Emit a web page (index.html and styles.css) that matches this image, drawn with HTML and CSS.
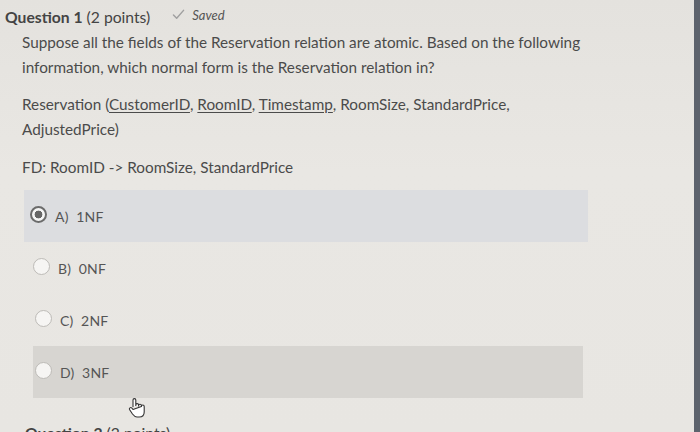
FILE: index.html
```html
<!DOCTYPE html>
<html lang="en">
<head>
<meta charset="utf-8">
<title>Question 1</title>
<link rel="stylesheet" href="styles.css">
</head>
<body>
<div class="screen">
  <div class="page">
    <div class="q-header">
      <span class="q-title"><b>Question 1</b> (2 points)</span>
      <span class="saved"><svg class="check" viewBox="0 0 14 12" width="13" height="11"><path d="M1.5 6.5 L5 10 L12.5 1.5" fill="none" stroke="#a0a0a0" stroke-width="1.6" stroke-linecap="round" stroke-linejoin="round"/></svg>Saved</span>
    </div>
    <div class="q-body">
      <p class="prompt">Suppose all the fields of the Reservation relation are atomic. Based on the following<br>information, which normal form is the Reservation relation in?</p>
      <p class="schema">Reservation (<u>CustomerID</u>, <u>RoomID</u>, <u>Timestamp</u>, RoomSize, StandardPrice,<br>AdjustedPrice)</p>
      <p class="fd">FD: RoomID -&gt; RoomSize, StandardPrice</p>
      <div class="options">
        <div class="opt opt-a selected"><span class="radio checked"></span><span class="label">A)&nbsp; 1NF</span></div>
        <div class="opt opt-b"><span class="radio"></span><span class="label">B)&nbsp; 0NF</span></div>
        <div class="opt opt-c"><span class="radio"></span><span class="label">C)&nbsp; 2NF</span></div>
        <div class="opt opt-d hover"><span class="radio"></span><span class="label">D)&nbsp; 3NF</span>
          <svg class="cursor" viewBox="0 0 20 22" width="20" height="22"><path d="M6 10 V3 a1.4 1.4 0 0 1 2.8 0 V9 M8.8 8 a1.4 1.4 0 0 1 2.8 0 V9.5 M11.6 8.6 a1.4 1.4 0 0 1 2.8 0 V10 M14.4 9.4 a1.4 1.4 0 0 1 2.8 0 V15 c0 3 -2 5 -5 5 H10 c-2 0 -3 -1 -4.5 -3 L2.5 12.5 a1.4 1.4 0 0 1 2.2 -1.6 L6 12.5 Z" fill="#fff" stroke="#333" stroke-width="1.1" stroke-linejoin="round"/></svg>
        </div>
      </div>
    </div>
    <div class="q-header next"><span class="q-title"><b>Question 2</b> (2 points)</span></div>
  </div>
  <div class="bezel"></div>
</div>
</body>
</html>
```

FILE: styles.css
```css
html, body {
  margin: 0;
  padding: 0;
  height: 100%;
  overflow: hidden;
}

body {
  background: #e8e6e2;
  font-family: "Lato", "Open Sans", sans-serif;
  color: #4b4b4b;
}

.screen {
  display: flex;
  height: 432px;
}

.page {
  flex: 1;
  background: linear-gradient(180deg, #e4e2de 0%, #e9e7e3 40%, #e8e6e2 100%);
  padding-top: 5px;
}

.bezel {
  width: 6px;
  background: #5d636d;
}

.q-header {
  display: flex;
  align-items: center;
  gap: 22px;
  padding-left: 5px;
  height: 24px;
  font-size: 15.7px;
  color: #444;
}

.q-title b {
  font-weight: 700;
}

.saved {
  display: flex;
  align-items: center;
  gap: 7px;
  font-size: 13px;
  font-style: italic;
  color: #555;
  margin-top: -5px;
}

.q-body {
  padding-left: 22px;
}

.q-body p {
  margin: 0;
  font-size: 15.3px;
  white-space: nowrap;
}

.prompt {
  padding-top: 1px;
  line-height: 25px;
}

.schema {
  margin-top: 12px !important;
  line-height: 25px;
}

.schema u {
  text-decoration-thickness: 1px;
  text-underline-offset: 2px;
}

.fd {
  margin-top: 12px !important;
  line-height: 26px;
}

.options {
  margin-top: 10px;
}

.opt {
  position: relative;
  display: flex;
  align-items: center;
  gap: 8px;
  height: 52px;
  width: 564px;
  padding-left: 6px;
  box-sizing: border-box;
  font-size: 14px;
  color: #555;
}

.opt-a { margin-left: 2px; }
.opt-b { margin-left: 5px; }
.opt-c { margin-left: 7px; }
.opt-d { margin-left: 11px; width: 550px; padding-left: 2px; }

.opt.selected {
  background: #dcdde0;
}

.opt.hover {
  background: #d7d5d1;
}

.radio {
  width: 17px;
  height: 17px;
  border-radius: 50%;
  border: 1.5px solid #bdbbb7;
  background: #f6f5f3;
  box-sizing: border-box;
  flex: none;
  margin-top: -4px;
}

.radio.checked {
  border: 2px solid #6b6b6b;
  background: radial-gradient(circle, #666 0 3.6px, #f5f5f5 4.2px);
}

.label {
  letter-spacing: 0.2px;
}

.cursor {
  position: absolute;
  left: 94px;
  top: 51px;
}

.q-header.next {
  margin-top: 23px;
  padding-left: 25px;
}
```
